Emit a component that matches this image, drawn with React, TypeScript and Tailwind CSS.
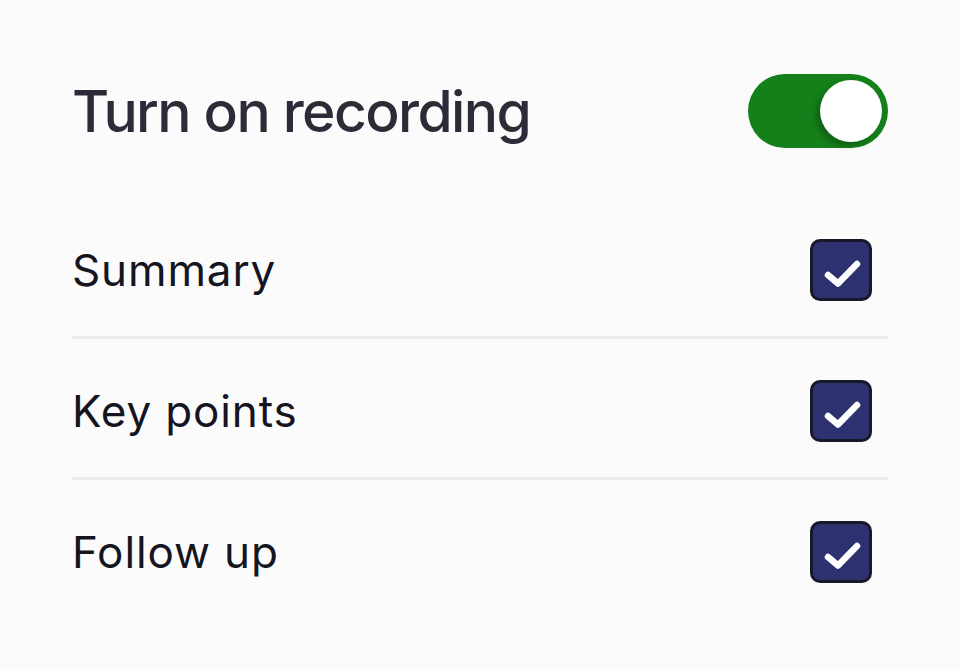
import React, { useState } from "react";

const options = [
  { key: "summary", label: "Summary" },
  { key: "keypoints", label: "Key points" },
  { key: "followup", label: "Follow up" },
];

function CheckBox({ checked, onChange }: { checked: boolean; onChange: () => void }) {
  return (
    <button
      onClick={onChange}
      className={`h-[62px] w-[62px] rounded-[10px] border-[3px] border-[#181828] ${
        checked ? "bg-[#2d3170]" : "bg-white"
      }`}
    >
      {checked && (
        <svg width="56" height="56" viewBox="0 0 56 56" fill="none" className="block">
          <path
            d="M15 33L25 41.5L44 22"
            stroke="white"
            strokeWidth="6.5"
            strokeLinecap="round"
            strokeLinejoin="round"
          />
        </svg>
      )}
    </button>
  );
}

export default function App() {
  const [recording, setRecording] = useState(true);
  const [checked, setChecked] = useState<Record<string, boolean>>({
    summary: true,
    keypoints: true,
    followup: true,
  });

  return (
    <div className="min-h-[670px] w-[960px] bg-[#fbfbfb] px-[72px] pt-[74px] font-['Inter',sans-serif]">
      {/* Header row */}
      <div className="flex items-center justify-between">
        <h1 className="text-[57px] font-medium leading-none tracking-[-0.028em] text-[#2c2c38]">
          Turn on recording
        </h1>
        <button
          onClick={() => setRecording(!recording)}
          className={`flex h-[74px] w-[140px] items-center rounded-full px-[6px] ${
            recording ? "justify-end bg-[#14801a]" : "justify-start bg-[#d4d4d8]"
          }`}
        >
          <span className="block h-[62px] w-[62px] rounded-full bg-white shadow-[-4px_4px_6px_rgba(0,0,0,0.25)]" />
        </button>
      </div>

      {/* Options */}
      <div className="mt-[53px]">
        {options.map((opt, i) => (
          <div key={opt.key}>
            {i > 0 && <div className="h-[3px] bg-[#ececec]" />}
            <div
              className={`flex items-center justify-between pb-[35px] pr-[16px] ${
                i > 0 ? "pt-[41px]" : "pt-[38px]"
              }`}
            >
              <span className="text-[44px] leading-none tracking-[0.02em] text-[#15151f]">
                {opt.label}
              </span>
              <CheckBox
                checked={checked[opt.key]}
                onChange={() => setChecked({ ...checked, [opt.key]: !checked[opt.key] })}
              />
            </div>
          </div>
        ))}
      </div>
    </div>
  );
}
